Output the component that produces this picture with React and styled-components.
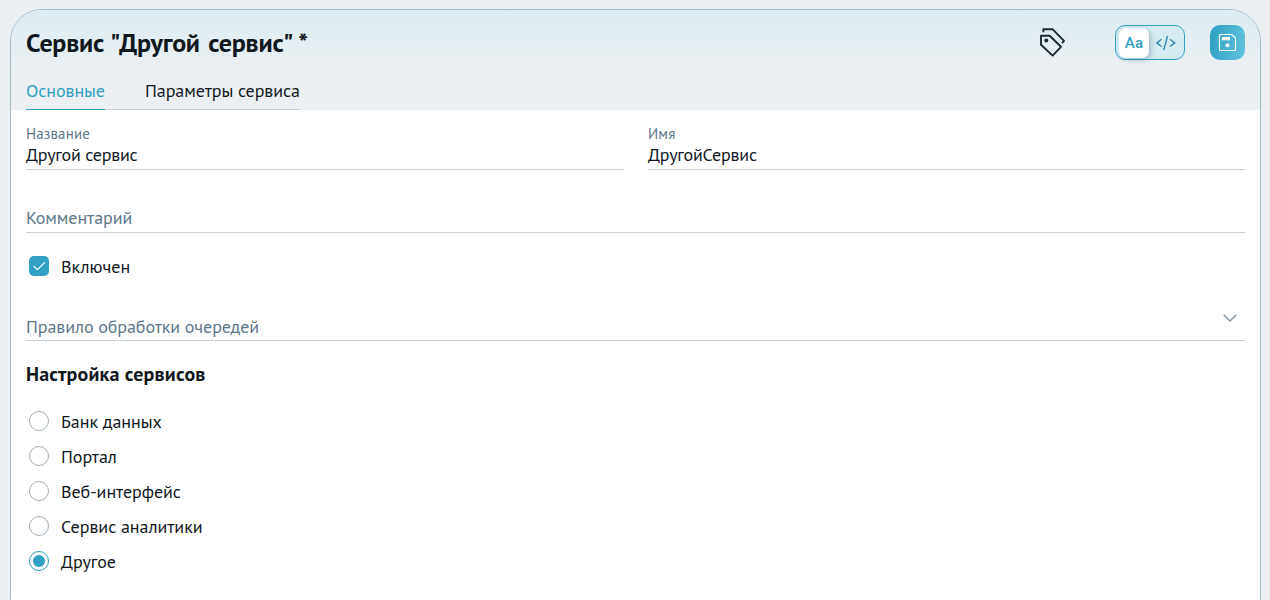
import React from "react";
import styled, { createGlobalStyle, css } from "styled-components";

const GlobalStyle = createGlobalStyle`
  * {
    box-sizing: border-box;
  }

  body {
    margin: 0;
    height: 600px;
    overflow: hidden;
    background: #ecf0f3;
    font-family: "PT Sans", "Noto Sans", sans-serif;
    font-size: 18px;
    color: #10181e;
  }
`;

const Card = styled.main`
  width: 1251px;
  height: 620px;
  margin: 9px 0 0 10px;
  border: 1px solid #9fbcc7;
  border-radius: 32px;
  background: #fff;
  overflow: hidden;
`;

const Header = styled.header`
  height: 100px;
  padding: 15px 15px 0;
  background: linear-gradient(#dcecf2, #ecf0f3 60%);
`;

const TitleRow = styled.div`
  display: flex;
  align-items: center;
  height: 35px;
`;

const Title = styled.h1`
  flex: 1;
  margin: 0;
  font-size: 26px;
  line-height: 36px;
  font-weight: 700;
  letter-spacing: -0.22px;
  word-spacing: 2px;
`;

const TagButton = styled.button`
  display: flex;
  width: 35px;
  height: 35px;
  margin-right: 45px;
  padding: 0;
  border: 1px solid rgba(240, 244, 246, 0.5);
  border-radius: 5px;
  background: none;
`;

const Switcher = styled.div`
  display: flex;
  align-items: center;
  width: 70px;
  height: 35px;
  margin-right: 25px;
  padding: 0 2px 0 3px;
  border: 1px solid #30a0c4;
  border-radius: 10px;
  background: #d6eaf1;
`;

const Mode = styled.div`
  display: flex;
  align-items: center;
  justify-content: center;
  width: ${({ $active }) => ($active ? 30 : 33)}px;
  height: 30px;
  border-radius: 7px;
  font-family: Roboto, sans-serif;
  font-size: 15px;
  font-weight: 500;
  letter-spacing: 0.2px;
  color: #30a0c4;
  ${({ $active }) =>
    $active &&
    css`
      background: #fff;
      box-shadow: 2px 2px 5px rgba(40, 80, 100, 0.3);
    `}
`;

const SaveButton = styled.button`
  display: flex;
  width: 35px;
  height: 35px;
  padding: 0;
  border: 0;
  border-radius: 10px;
  background: linear-gradient(100deg, #2d9fc3, #62c4df);
`;

const Tabs = styled.nav`
  display: flex;
  width: 274px;
  height: 35px;
  margin-top: 15px;
  border-bottom: 1px solid #cdd3d7;
`;

const Tab = styled.a`
  flex-shrink: 0;
  width: ${({ $width }) => $width}px;
  height: 35px;
  margin-right: 40px;
  line-height: 32px;
  letter-spacing: -0.08px;
  white-space: nowrap;
  color: ${({ $active }) => ($active ? "#30a0c4" : "#10181e")};
  border-bottom: ${({ $active }) => ($active ? "1px solid #30a0c4" : "0")};
`;

const Body = styled.div`
  padding: 0 15px;
`;

const Columns = styled.div`
  display: grid;
  grid-template-columns: 598px 597px;
  column-gap: 24px;
  height: 60px;
`;

const Field = styled.div`
  height: 60px;
  padding-top: 14px;
  border-bottom: 1px solid #c9d0d6;
`;

const Label = styled.div`
  height: 20px;
  font-size: 15px;
  line-height: 20px;
  letter-spacing: 0.12px;
  color: #5d778a;
`;

const Value = styled.div`
  height: 24px;
  line-height: 22px;
  letter-spacing: -0.2px;
`;

const EmptyField = styled.div`
  display: flex;
  align-items: flex-end;
  justify-content: space-between;
  height: ${({ $height }) => $height}px;
  padding: 0 8px ${({ $bottom }) => $bottom}px 0;
  border-bottom: 1px solid #c5d0d8;
  line-height: 24px;
  letter-spacing: -0.08px;
  color: #5d778a;

  svg {
    margin-bottom: 17px;
  }
`;

const Option = styled.label`
  display: flex;
  align-items: center;
  gap: 12px;
  height: 35px;
  padding-left: 3px;
`;

const CheckOption = styled(Option)`
  margin-top: 15px;
  margin-bottom: 1px;
`;

const Checkbox = styled.span`
  display: flex;
  width: 20px;
  height: 20px;
  border-radius: 5px;
  background: #30a0c4;
`;

const Radio = styled.span`
  display: flex;
  align-items: center;
  justify-content: center;
  width: 20px;
  height: 20px;
  border: 1px solid ${({ $checked }) => ($checked ? "#30a0c4" : "#9dacb7")};
  border-radius: 50%;

  &::after {
    content: "";
    width: 12px;
    height: 12px;
    border-radius: 50%;
    background: ${({ $checked }) => ($checked ? "#30a0c4" : "transparent")};
  }
`;

const OptionText = styled.span`
  padding-top: 2px;
  line-height: 24px;
  letter-spacing: -0.04px;
`;

const Heading = styled.h2`
  height: 30px;
  margin: 18px 0 14px;
  font-size: 20px;
  line-height: 30px;
  font-weight: 700;
  letter-spacing: 0.17px;
`;

const services = [
  { name: "Банк данных" },
  { name: "Портал" },
  { name: "Веб-интерфейс" },
  { name: "Сервис аналитики" },
  { name: "Другое", checked: true },
];

const App = () => {
  return (
    <>
      <GlobalStyle />
      <Card>
        <Header>
          <TitleRow>
            <Title>Сервис "Другой сервис" *</Title>

            <TagButton>
              <svg width="33" height="33" viewBox="0 0 33 33" fill="none">
                <path
                  d="M5 9.7H13.7L25 20.8L16.6 29.6L5 18.7Z"
                  stroke="#1b2b35"
                  strokeWidth="1.9"
                  strokeLinejoin="round"
                />
                <path
                  d="M7.3 6.2V3.2H16.5L28 14.8L26 17.2"
                  stroke="#1b2b35"
                  strokeWidth="1.9"
                  strokeLinejoin="round"
                />
                <circle cx="10.3" cy="14.6" r="2" fill="#1b2b35" />
              </svg>
            </TagButton>

            <Switcher>
              <Mode $active>Aa</Mode>
              <Mode>
                <svg width="21" height="16" viewBox="0 0 21 16" fill="none">
                  <path
                    d="M6.5 4.3L1.8 7.9L6.5 11.5M15 4.3L19.7 7.9L15 11.5M12.5 1L8.8 15"
                    stroke="#2b8dae"
                    strokeWidth="1.4"
                  />
                </svg>
              </Mode>
            </Switcher>

            <SaveButton>
              <svg width="35" height="35" viewBox="0 0 35 35" fill="none">
                <path
                  d="M10.5 9.5H21.8L25.5 13V24.5Q25.5 25.5 24.5 25.5H10.5Q9.5 25.5 9.5 24.5V10.5Q9.5 9.5 10.5 9.5Z"
                  stroke="#fff"
                  strokeWidth="1.2"
                />
                <path d="M12 12H20V15.2H12Z" fill="#fff" />
                <circle cx="17.5" cy="20.2" r="2" fill="#fff" />
              </svg>
            </SaveButton>
          </TitleRow>

          <Tabs>
            <Tab $active $width={79}>
              Основные
            </Tab>
            <Tab $width={155}>Параметры сервиса</Tab>
          </Tabs>
        </Header>

        <Body>
          <Columns>
            <Field>
              <Label>Название</Label>
              <Value>Другой сервис</Value>
            </Field>
            <Field>
              <Label>Имя</Label>
              <Value>ДругойСервис</Value>
            </Field>
          </Columns>

          <EmptyField $height={63} $bottom={2}>
            <span>Комментарий</span>
          </EmptyField>

          <CheckOption>
            <Checkbox>
              <svg width="20" height="20" viewBox="0 0 20 20" fill="none">
                <path d="M4.7 10L8.3 13.7L16 6.3" stroke="#fff" strokeWidth="1.2" />
              </svg>
            </Checkbox>
            <OptionText>Включен</OptionText>
          </CheckOption>

          <EmptyField $height={57} $bottom={1}>
            <span>Правило обработки очередей</span>
            <svg width="14" height="8" viewBox="0 0 14 8" fill="none">
              <path d="M0.7 0.8L7 7L13.3 0.8" stroke="#7f93a2" strokeWidth="1.3" />
            </svg>
          </EmptyField>

          <Heading>Настройка сервисов</Heading>

          {services.map(({ name, checked }) => (
            <Option key={name}>
              <Radio $checked={checked} />
              <OptionText>{name}</OptionText>
            </Option>
          ))}
        </Body>
      </Card>
    </>
  );
};

export default App;
